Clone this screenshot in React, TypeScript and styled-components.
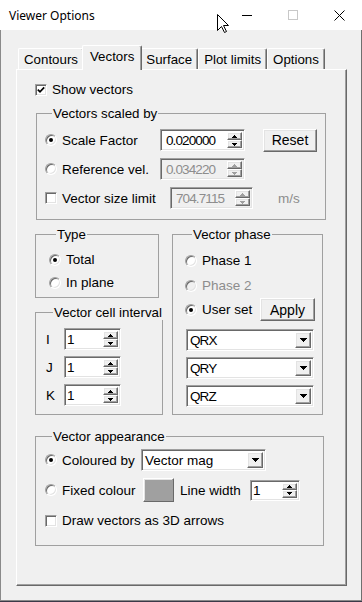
import React from "react";
import styled, { createGlobalStyle } from "styled-components";

const GlobalStyle = createGlobalStyle`
  html, body {
    margin: 0;
    padding: 0;
  }
  body {
    background: #3a3a48;
    font-family: "Liberation Sans", Arial, sans-serif;
    font-size: 13.5px;
    color: #000;
  }
`;

const Window = styled.div`
  position: relative;
  width: 362px;
  height: 601px;
  display: flex;
  flex-direction: column;
  overflow: hidden;
`;

const TitleBar = styled.div`
  height: 30px;
  flex-shrink: 0;
  display: flex;
  align-items: center;
  background: #fff;
`;

const Title = styled.div`
  flex: 1;
  padding-left: 9px;
  font-family: "Noto Sans", "Open Sans", sans-serif;
  font-size: 12px;
  color: #000;
`;

const CaptionButton = styled.div`
  width: 46px;
  height: 30px;
  display: flex;
  align-items: center;
  justify-content: center;
`;

const Body = styled.div`
  flex: 1;
  display: flex;
  flex-direction: column;
  padding: 15px 0 0 15px;
  background: #f0f0f0;
  border-left: 1px solid #8a8a8a;
  border-right: 1px solid #6f6f6f;
  border-bottom: 1px solid #8a8a8a;
`;

const TabStrip = styled.div`
  height: 24px;
  display: flex;
  align-items: flex-end;
  padding-left: 2px;
`;

const Tab = styled.div<{ $active?: boolean }>`
  position: relative;
  z-index: ${(p) => (p.$active ? 2 : 1)};
  height: ${(p) => (p.$active ? 25 : 21)}px;
  margin: 0 ${(p) => (p.$active ? -2 : 0)}px ${(p) => (p.$active ? -1 : 0)}px;
  padding: 0 ${(p) => (p.$active ? 7 : 5)}px ${(p) => (p.$active ? 4 : 0)}px;
  box-sizing: border-box;
  display: flex;
  align-items: center;
  background: #f0f0f0;
  border-top: 1px solid #fff;
  border-left: 1px solid #fff;
  border-right: 1px solid #696969;
  border-radius: 2px 2px 0 0;
  box-shadow: inset -1px 0 0 #a0a0a0;
  font-size: 13.3px;
  line-height: 15px;
  white-space: nowrap;
`;

const Panel = styled.div`
  width: 331px;
  height: 517px;
  box-sizing: border-box;
  display: flex;
  flex-direction: column;
  align-items: flex-start;
  padding: 12px 0 0 18px;
  border-top: 1px solid #fff;
  border-left: 1px solid #fff;
  border-right: 1px solid #696969;
  border-bottom: 1px solid #696969;
  box-shadow: inset -1px -1px 0 #a0a0a0;
`;

const Row = styled.div<{ $h?: number; $mt?: number; $ml?: number }>`
  display: flex;
  align-items: center;
  height: ${(p) => p.$h ?? 15}px;
  margin-top: ${(p) => p.$mt ?? 0}px;
  margin-left: ${(p) => p.$ml ?? 0}px;
`;

const Label = styled.span<{ $w?: number; $ml?: number; $disabled?: boolean }>`
  display: inline-block;
  width: ${(p) => (p.$w ? `${p.$w}px` : "auto")};
  margin-left: ${(p) => p.$ml ?? 0}px;
  flex-shrink: 0;
  line-height: 15px;
  white-space: nowrap;
  color: ${(p) => (p.$disabled ? "#8d8d8d" : "#000")};
`;

const Group = styled.fieldset<{ $w: number; $pad: string; $ml?: number; $mt?: number; $grow?: boolean }>`
  width: ${(p) => p.$w}px;
  min-width: 0;
  box-sizing: border-box;
  margin: ${(p) => p.$mt ?? 0}px 0 0 ${(p) => p.$ml ?? 0}px;
  padding: ${(p) => p.$pad};
  border: 1px solid #a0a0a0;
  display: flex;
  flex-direction: column;
  align-items: flex-start;
  ${(p) => (p.$grow ? "align-self: stretch;" : "")}
`;

const Legend = styled.legend`
  margin-left: 7px;
  padding: 0 1px;
  line-height: 15px;
  font-size: 13.3px;
  white-space: nowrap;
`;

const Middle = styled.div`
  display: flex;
  align-items: stretch;
  margin-top: 7px;
`;

const Column = styled.div`
  display: flex;
  flex-direction: column;
`;

const Sunken = `
  box-sizing: border-box;
  border-top: 1px solid #a0a0a0;
  border-left: 1px solid #a0a0a0;
  border-right: 1px solid #fff;
  border-bottom: 1px solid #fff;
  box-shadow: inset 1px 1px 0 #696969, inset -1px -1px 0 #e3e3e3;
`;

const Raised = `
  box-sizing: border-box;
  border-top: 1px solid #fff;
  border-left: 1px solid #fff;
  border-right: 1px solid #696969;
  border-bottom: 1px solid #696969;
  box-shadow: inset -1px -1px 0 #a0a0a0, inset 1px 1px 0 #e3e3e3;
`;

const RadioCircle = styled.span<{ $checked?: boolean; $disabled?: boolean }>`
  position: relative;
  flex-shrink: 0;
  width: 12px;
  height: 12px;
  border-radius: 50%;
  ${Sunken}
  background: ${(p) => (p.$disabled ? "#f0f0f0" : "#fff")};
  &::after {
    content: "";
    display: ${(p) => (p.$checked ? "block" : "none")};
    position: absolute;
    left: 3px;
    top: 3px;
    width: 4px;
    height: 4px;
    border-radius: 50%;
    background: #000;
  }
`;

const CheckSquare = styled.span`
  flex-shrink: 0;
  width: 12px;
  height: 12px;
  display: flex;
  align-items: center;
  justify-content: center;
  ${Sunken}
  background: #fff;
`;

const EditBox = styled.div<{ $w: number; $h: number; $disabled?: boolean }>`
  width: ${(p) => p.$w}px;
  height: ${(p) => p.$h}px;
  display: flex;
  align-items: stretch;
  padding: 2px;
  ${Sunken}
  background: ${(p) => (p.$disabled ? "#f0f0f0" : "#fff")};
`;

const EditText = styled.span<{ $pad: number; $disabled?: boolean; $narrow?: boolean }>`
  flex: 1;
  display: flex;
  align-items: center;
  padding-left: ${(p) => p.$pad}px;
  font-size: 13.5px;
  letter-spacing: ${(p) => (p.$narrow ? -0.9 : 0)}px;
  color: ${(p) => (p.$disabled ? "#8d8d8d" : "#000")};
`;

const SpinColumn = styled.div`
  width: 15px;
  display: flex;
  flex-direction: column;
`;

const SpinButton = styled.div`
  flex: 1;
  display: flex;
  align-items: center;
  justify-content: center;
  background: #f0f0f0;
  ${Raised}
`;

const DropButton = styled.div`
  width: 16px;
  display: flex;
  align-items: center;
  justify-content: center;
  background: #f0f0f0;
  ${Raised}
`;

const PushButton = styled.div<{ $w: number; $h: number; $ml?: number; $fill?: string }>`
  width: ${(p) => p.$w}px;
  height: ${(p) => p.$h}px;
  margin-left: ${(p) => p.$ml ?? 0}px;
  flex-shrink: 0;
  display: flex;
  align-items: center;
  justify-content: center;
  background: ${(p) => p.$fill ?? "#f0f0f0"};
  font-size: 14px;
  ${Raised}
`;

const Cursor = styled.svg`
  position: absolute;
  left: 217px;
  top: 14px;
`;

const Arrow: React.FC<{ up?: boolean; disabled?: boolean; big?: boolean }> = ({ up, disabled, big }) => {
  const w = big ? 7 : 5;
  const h = big ? 4 : 3;
  const pts = up ? `0,${h} ${w},${h} ${w / 2},0` : `0,0 ${w},0 ${w / 2},${h}`;
  return (
    <svg width={w} height={h} viewBox={`0 0 ${w} ${h}`} shapeRendering="crispEdges">
      <polygon points={pts} fill={disabled ? "#a0a0a0" : "#000"} />
    </svg>
  );
};

const Edit: React.FC<{ value: string; w: number; h?: number; pad?: number; disabled?: boolean }> = ({
  value,
  w,
  h = 22,
  pad = 3,
  disabled,
}) => (
  <EditBox $w={w} $h={h} $disabled={disabled}>
    <EditText $pad={pad} $disabled={disabled} $narrow>
      {value}
    </EditText>
    <SpinColumn>
      <SpinButton>
        <Arrow up disabled={disabled} />
      </SpinButton>
      <SpinButton>
        <Arrow disabled={disabled} />
      </SpinButton>
    </SpinColumn>
  </EditBox>
);

const Combo: React.FC<{ value: string; w: number; narrow?: boolean }> = ({ value, w, narrow }) => (
  <EditBox $w={w} $h={22}>
    <EditText $pad={1} $narrow={narrow}>
      {value}
    </EditText>
    <DropButton>
      <Arrow big />
    </DropButton>
  </EditBox>
);

const Check = () => (
  <CheckSquare>
    <svg width="8" height="8" viewBox="0 0 8 8">
      <polyline points="0.8,3.6 3,5.8 7.2,1.4" fill="none" stroke="#000" strokeWidth="1.7" />
    </svg>
  </CheckSquare>
);

const App: React.FC = () => {
  return (
    <Window>
      <GlobalStyle />
      <TitleBar>
        <Title>Viewer Options</Title>
        <CaptionButton>
          <svg width="10" height="1">
            <rect width="10" height="1" fill="#000" />
          </svg>
        </CaptionButton>
        <CaptionButton>
          <svg width="10" height="10">
            <rect x="0.5" y="0.5" width="9" height="9" fill="none" stroke="#c8c8c8" />
          </svg>
        </CaptionButton>
        <CaptionButton>
          <svg width="11" height="11">
            <path d="M0.5 0.5 L10.5 10.5 M10.5 0.5 L0.5 10.5" stroke="#000" strokeWidth="1" />
          </svg>
        </CaptionButton>
      </TitleBar>

      <Body>
        <TabStrip>
          <Tab>Contours</Tab>
          <Tab $active>Vectors</Tab>
          <Tab>Surface</Tab>
          <Tab>Plot limits</Tab>
          <Tab>Options</Tab>
        </TabStrip>

        <Panel>
          <Row>
            <Check />
            <Label $ml={5}>Show vectors</Label>
          </Row>

          <Group $w={290} $ml={1} $mt={9} $pad="8px 0 10px 8px">
            <Legend>Vectors scaled by</Legend>
            <Row $h={22}>
              <RadioCircle $checked />
              <Label $ml={5} $w={98}>
                Scale Factor
              </Label>
              <Edit value="0.020000" w={85} />
              <PushButton $w={54} $h={23} $ml={18}>
                Reset
              </PushButton>
            </Row>
            <Row $h={22} $mt={7}>
              <RadioCircle />
              <Label $ml={5} $w={98}>
                Reference vel.
              </Label>
              <Edit value="0.034220" w={85} disabled />
            </Row>
            <Row $h={22} $mt={7}>
              <CheckSquare />
              <Label $ml={5} $w={108}>
                Vector size limit
              </Label>
              <Edit value="704.7115" w={83} disabled />
              <Label $ml={25} $disabled>
                m/s
              </Label>
            </Row>
          </Group>

          <Middle>
            <Column>
              <Group $w={124} $pad="10px 0 7px 13px">
                <Legend>Type</Legend>
                <Row>
                  <RadioCircle $checked />
                  <Label $ml={5}>Total</Label>
                </Row>
                <Row $mt={8}>
                  <RadioCircle />
                  <Label $ml={5}>In plane</Label>
                </Row>
              </Group>

              <Group $w={128} $mt={7} $pad="8px 0 8px 10px">
                <Legend>Vector cell interval</Legend>
                {["I", "J", "K"].map((axis, i) => (
                  <Row key={axis} $h={22} $mt={i === 0 ? 0 : 6}>
                    <Label $w={18}>{axis}</Label>
                    <Edit value="1" w={57} pad={0} />
                  </Row>
                ))}
              </Group>
            </Column>

            <Group $w={151} $ml={9} $grow $pad="11px 0 0 12px">
              <Legend>Vector phase</Legend>
              <Row>
                <RadioCircle />
                <Label $ml={5}>Phase 1</Label>
              </Row>
              <Row $mt={10}>
                <RadioCircle $disabled />
                <Label $ml={5} $disabled>
                  Phase 2
                </Label>
              </Row>
              <Row $h={23} $mt={5}>
                <RadioCircle $checked />
                <Label $ml={5} $w={58}>
                  User set
                </Label>
                <PushButton $w={55} $h={23}>
                  Apply
                </PushButton>
              </Row>
              {["QRX", "QRY", "QRZ"].map((q, i) => (
                <Row key={q} $h={22} $mt={i === 0 ? 8 : 6} $ml={1}>
                  <Combo value={q} w={128} narrow />
                </Row>
              ))}
            </Group>
          </Middle>

          <Group $w={289} $mt={14} $pad="5px 0 17px 9px">
            <Legend>Vector appearance</Legend>
            <Row $h={22}>
              <RadioCircle $checked />
              <Label $ml={5} $w={79}>
                Coloured by
              </Label>
              <Combo value="Vector mag" w={125} />
            </Row>
            <Row $h={24} $mt={7}>
              <RadioCircle />
              <Label $ml={5} $w={81}>
                Fixed colour
              </Label>
              <PushButton $w={31} $h={24} $fill="#a0a0a0" />
              <Label $ml={6} $w={70}>
                Line width
              </Label>
              <Edit value="1" w={50} h={21} pad={0} />
            </Row>
            <Row $mt={11}>
              <CheckSquare />
              <Label $ml={5}>Draw vectors as 3D arrows</Label>
            </Row>
          </Group>
        </Panel>
      </Body>

      <Cursor width="13" height="20" viewBox="0 0 13 20">
        <polygon
          points="0.5,0.5 0.5,16.5 4.5,12.5 7.5,18.5 9.5,17.5 6.5,11.5 11.5,11.5"
          fill="#fff"
          stroke="#000"
          strokeWidth="1"
        />
      </Cursor>
    </Window>
  );
};

export default App;
